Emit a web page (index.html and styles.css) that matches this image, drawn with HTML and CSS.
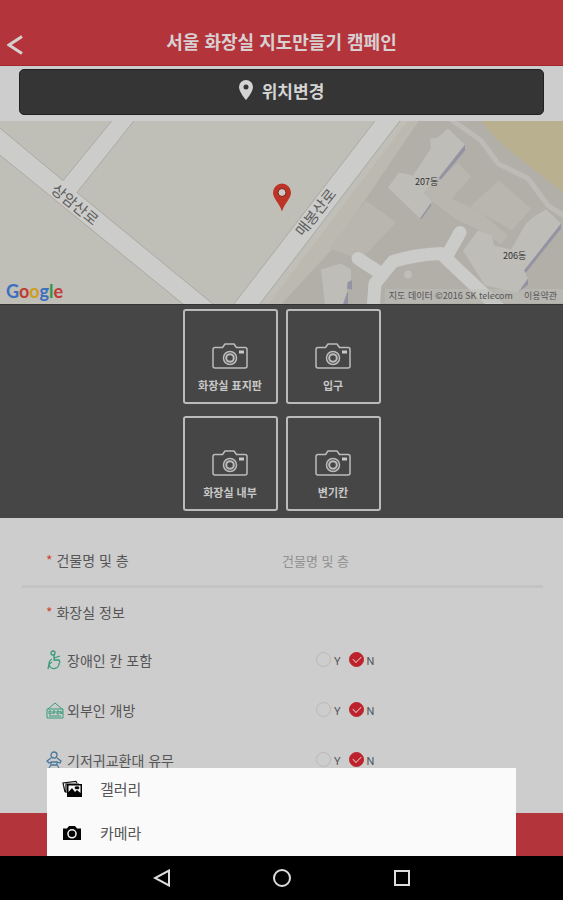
FILE: index.html
```html
<!DOCTYPE html>
<html lang="ko">
<head>
    <meta charset="UTF-8">
    <meta name="viewport" content="width=device-width, initial-scale=1">
    <title>서울 화장실 지도만들기 캠페인</title>
    <link rel="stylesheet" href="styles.css">
</head>
<body>
    <svg width="0" height="0" class="defs" aria-hidden="true">
        <symbol id="camera" viewBox="0 0 36 26">
            <g fill="none" stroke="#bcbcbc" stroke-width="1.5" stroke-linejoin="round">
                <path d="M3 4.500H10.500L13 1H22L24.500 4.500H33Q35 4.500 35 6.500V23Q35 25 33 25H3Q1 25 1 23V6.500Q1 4.500 3 4.500Z"/>
                <circle cx="18" cy="15" r="6.500"/>
                <circle cx="18" cy="15" r="3.800" stroke-width="2"/>
            </g>
            <rect x="27" y="7.500" width="5" height="3" fill="#c8c8c8"/>
        </symbol>
    </svg>

    <main class="screen">
        <header class="header">
            <button class="back" aria-label="뒤로">
                <svg width="16" height="20" viewBox="0 0 16 20"><path d="M15 1.500L2 10L15 18.500" fill="none" stroke="#d6d0d0" stroke-width="3"/></svg>
            </button>
            <h1>서울 화장실 지도만들기 캠페인</h1>
        </header>

        <div class="location">
            <button class="location-btn">
                <svg width="14" height="20" viewBox="0 0 14 20"><path fill="#d4d4d4" fill-rule="evenodd" d="M7 0A7 7 0 0 0 0 7C0 12 7 20 7 20S14 12 14 7A7 7 0 0 0 7 0ZM7 4.500A2.500 2.500 0 1 1 7 9.500A2.500 2.500 0 1 1 7 4.500Z"/></svg>
                위치변경
            </button>
        </div>

        <div class="map">
            <svg class="map-tiles" viewBox="0 0 563 184" preserveAspectRatio="xMidYMid slice">
                <rect width="563" height="184" fill="#bfbeb7"/>
                <!-- apartment block -->
                <path fill="#bcb9b0" d="M408 0H563V184H268Z"/>
                <path fill="#b2afa9" d="M419 0H563V184H281L330 131Z"/>
                <path fill="#b9b090" d="M481 0H563V72L520 38L500 22Z"/>
                <path fill="none" stroke="#bdbbb6" stroke-width="5" stroke-linejoin="round" d="M448 -3L464 8L481 20L498 43L528 58L548 85L565 96"/>
                <g fill="#b8b6af">
                    <path d="M366 80L396 102L361 139L329 128Z"/>
                    <path d="M458 42L471 56L452 78L481 92L508 115L501 124L480 110L455 98L432 81L424 72Z"/>
                    <path d="M499 60L531 88L512 110L470 86Z"/>
                </g>
                <g fill="#9493a3">
                    <path d="M465 23V30L441 59L437 56Z"/>
                    <path d="M431 79V85L421 99L418 94Z"/>
                    <path d="M561 102V108L526 152L522 148Z"/>
                    <path d="M528 157V164L519 172L516 168Z"/>
                    <path d="M348 160H352V169L347 168ZM342 172H348V184H342Z"/>
                </g>
                <g fill="#bebdb7">
                    <path d="M448 8L465 24L439 57L424 72L432 81L420 98L388 67L399 52L413 55L431 28L430 18L438 17Z"/>
                    <path d="M546 89L561 103L524 150L528 158L518 172L485 165L463 130L478 110L492 115L494 125L511 129L526 103L534 96Z"/>
                    <path d="M321 149L341 143L351 149V160L347 162V172L343 184H325Z"/>
                    <circle cx="408" cy="154" r="4"/>
                </g>
                <path fill="none" stroke="#cbcbc9" stroke-width="13" stroke-linejoin="round" stroke-linecap="round" d="M373 190L375 163L393 141Q415 134 441 133L498 187M358 138L381 153M460 112L446 137"/>
                <!-- main roads -->
                <path fill="#cccccb" stroke="#aaa9a4" d="M-2 6L63 60L113 -1H135L77 72L216 186H186L-2 33Z"/>
                <path fill="#cccccb" stroke="#aaa9a4" d="M376 -1H401L258 186H232Z"/>
                <text class="road" transform="translate(50 71) rotate(39)">상암산로</text>
                <text class="road" transform="translate(303 117) rotate(-52)">매봉산로</text>
                <text class="dong" x="415" y="64">207동</text>
                <text class="dong" x="503" y="138">206동</text>
                <!-- pin -->
                <path fill="#bd3427" d="M282 63A9 9 0 0 0 273 72C273 78 279 82 282 91C285 82 291 78 291 72A9 9 0 0 0 282 63Z"/>
                <circle cx="282" cy="72" r="4" fill="#d0c9c6" stroke="#732019"/>
            </svg>
            <div class="google"><span class="b">G</span><span class="r">o</span><span class="y">o</span><span class="b">g</span><span class="g">l</span><span class="r">e</span></div>
            <div class="credit"><span>지도 데이터 ©2016 SK telecom</span><a href="#">이용약관</a></div>
        </div>

        <div class="photos">
            <button class="photo"><svg width="36" height="26"><use href="#camera"/></svg>화장실 표지판</button>
            <button class="photo"><svg width="36" height="26"><use href="#camera"/></svg>입구</button>
            <button class="photo"><svg width="36" height="26"><use href="#camera"/></svg>화장실 내부</button>
            <button class="photo"><svg width="36" height="26"><use href="#camera"/></svg>변기칸</button>
        </div>

        <form class="form">
            <div class="row name-row">
                <label for="building"><span class="req">*</span> 건물명 및 층</label>
                <input type="text" id="building" placeholder="건물명 및 층">
            </div>
            <h2><span class="req">*</span> 화장실 정보</h2>

            <div class="row">
                <span class="item">
                    <svg width="18" height="20" viewBox="0 0 18 20" fill="none" stroke="#359b7b" stroke-width="1.300"><circle cx="7" cy="3" r="2"/><path d="M8 5V10H13L14 13M8 8L14 6M6 9A5 5 0 1 0 13 13M6 12L3 14L2 19"/></svg>
                    장애인 칸 포함
                </span>
                <span class="yn">
                    <label><input type="radio" name="disabled">Y</label>
                    <label><input type="radio" name="disabled" checked>N</label>
                </span>
            </div>
            <div class="row">
                <span class="item">
                    <svg width="18" height="20" viewBox="0 0 18 20" fill="none" stroke="#359b7b"><path d="M1 9H17V18H1ZM2 9L9 3L16 9M3 16H15"/><path stroke-width="1" d="M3 11H5V14H3ZM7 14V11H9V13H7M13 11H11V14H13M11 12H13M14 14V11L16 14V11"/></svg>
                    외부인 개방
                </span>
                <span class="yn">
                    <label><input type="radio" name="open">Y</label>
                    <label><input type="radio" name="open" checked>N</label>
                </span>
            </div>
            <div class="row">
                <span class="item">
                    <svg width="18" height="20" viewBox="0 0 18 20" fill="none" stroke="#4a7898" stroke-width="1.300"><circle cx="8" cy="5" r="3"/><path d="M5 8L1 11L3 13L5 12V15H11V12L14 13L15 11L11 8M5 15L3 18M11 15L13 18M5 12H11"/></svg>
                    기저귀교환대 유무
                </span>
                <span class="yn">
                    <label><input type="radio" name="diaper">Y</label>
                    <label><input type="radio" name="diaper" checked>N</label>
                </span>
            </div>
        </form>

        <div class="submit-bar"></div>

        <div class="sheet">
            <button>
                <svg width="20" height="18" viewBox="0 0 20 18"><path fill="none" stroke="#111" stroke-width="1.200" d="M3 12L1 3L14 1.500L15 3M4 13V4H17"/><path fill="#050505" fill-rule="evenodd" d="M5 4H20V17H5ZM6.500 5.500V12L10 8L13 12L15 10L18.500 13V5.500ZM15 6.500A1.500 1.500 0 1 1 15 9A1.500 1.500 0 1 1 15 6.500Z"/></svg>
                갤러리
            </button>
            <button>
                <svg width="20" height="18" viewBox="0 0 20 18"><path fill="#050505" fill-rule="evenodd" d="M1 4.500H5L7 2H13L15 4.500H19V16H1ZM10 5A4.800 4.800 0 1 0 10 14.600A4.800 4.800 0 1 0 10 5Z"/><circle cx="10" cy="9.800" r="3.300" fill="#050505"/></svg>
                카메라
            </button>
        </div>
    </main>

    <nav class="navbar">
        <button aria-label="뒤로"><svg width="18" height="18" viewBox="0 0 18 18"><path d="M16 1.500V16.500L2 9Z"/></svg></button>
        <button aria-label="홈"><svg width="18" height="18" viewBox="0 0 18 18"><circle cx="9" cy="9" r="8"/></svg></button>
        <button aria-label="최근 앱"><svg width="18" height="18" viewBox="0 0 18 18"><path d="M2 2H16V16H2Z"/></svg></button>
    </nav>
</body>
</html>
```
FILE: styles.css
```css
* {
    box-sizing: border-box;
}
body {
    margin: 0;
    min-height: 100vh;
    display: flex;
    flex-direction: column;
    background: #cdcdcd;
    color: #555;
    font-family: "Noto Sans CJK KR", sans-serif;
    font-size: 14px;
}
button, input {
    font-family: inherit;
    border: none;
    background: none;
    padding: 0;
}
button {
    cursor: pointer;
}
.defs {
    position: absolute;
}
.screen {
    position: relative;
    flex: 1;
    display: flex;
    flex-direction: column;
}

/* header */
.header {
    display: grid;
    grid-template-columns: 40px 1fr 40px;
    align-items: end;
    height: 66px;
    padding-bottom: 10px;
    background: #b4343c;
    border-bottom: 1px solid #a5232c;
}
.back {
    display: flex;
    padding-left: 7px;
}
h1 {
    margin: 0;
    font-size: 18px;
    line-height: 28px;
    text-align: center;
    color: #d8d0d0;
}

/* location */
.location {
    padding: 3px 19px 6px;
}
.location-btn {
    display: flex;
    justify-content: center;
    align-items: center;
    gap: 9px;
    width: 100%;
    height: 46px;
    padding-bottom: 4px;
    border: 1px solid #222;
    border-radius: 5px;
    background: #353535;
    color: #d4d4d4;
    font-size: 17px;
    font-weight: bold;
}

/* map */
.map {
    position: relative;
    height: 183px;
    overflow: hidden;
}
.map-tiles {
    display: block;
    width: 100%;
    height: 100%;
}
.road {
    font-size: 15px;
    fill: #5d5d5b;
}
.dong {
    font-size: 9px;
    fill: #333;
}
.google {
    position: absolute;
    left: 6px;
    bottom: 1px;
    font-family: Lato, sans-serif;
    font-size: 18px;
    line-height: 24px;
    font-weight: bold;
}
.google .b { color: #3b6fc0; }
.google .r { color: #c23a32; }
.google .y { color: #cf9d20; }
.google .g { color: #37924d; }
.credit {
    position: absolute;
    right: 0;
    bottom: 1px;
    display: flex;
    gap: 11px;
    padding: 0 6px 0 4px;
    background: rgba(190, 189, 185, 0.5);
    font-size: 9px;
    line-height: 14px;
}
.credit a {
    color: inherit;
    text-decoration: none;
}

/* photos */
.photos {
    display: grid;
    grid-template-columns: 95px 95px;
    justify-content: center;
    gap: 12px 8px;
    padding: 4px 0 7px;
    background: #464646;
    border-top: 1px solid #333;
}
.photo {
    display: flex;
    flex-direction: column;
    align-items: center;
    justify-content: flex-end;
    gap: 8px;
    height: 95px;
    padding-bottom: 9px;
    border: 2px solid #bbb;
    border-radius: 3px;
    color: #c8c8c8;
    font-size: 11px;
    line-height: 16px;
    font-weight: bold;
}

/* form */
.form {
    padding: 17px 20px 0 22px;
}
.row {
    display: grid;
    grid-template-columns: 270px 1fr;
    align-items: center;
    height: 50px;
    padding-left: 24px;
}
.name-row {
    grid-template-columns: 236px 1fr;
    height: 53px;
    border-bottom: 3px solid #c3c3c3;
}
.name-row input {
    width: 100%;
    font-size: 13px;
    color: #555;
}
.name-row input::placeholder {
    color: #909090;
    opacity: 1;
}
h2 {
    margin: 0;
    padding-left: 24px;
    font-size: 14px;
    font-weight: normal;
    line-height: 48px;
}
.req {
    color: #d0472b;
}
.item {
    display: flex;
    align-items: center;
    gap: 3px;
    padding-bottom: 2px;
}
.yn {
    display: flex;
    gap: 8px;
}
.yn label {
    display: flex;
    align-items: center;
    gap: 3px;
    padding-top: 2px;
    font-family: Roboto, sans-serif;
    font-size: 11px;
    line-height: 20px;
}
.yn input {
    position: relative;
    appearance: none;
    width: 15px;
    height: 15px;
    margin: 0 0 5px;
    border: 1px solid #b9b9b9;
    border-radius: 50%;
}
.yn input:checked {
    background: #bd222c;
    border-color: #bd222c;
}
.yn input:checked::after {
    content: "";
    position: absolute;
    left: 3px;
    top: 3px;
    width: 7px;
    height: 4px;
    border: solid #dcb5b3;
    border-width: 0 0 1px 1px;
    transform: rotate(-45deg);
}

.submit-bar {
    height: 43px;
    margin-top: auto;
    background: #b4343c;
}

/* picker */
.sheet {
    position: absolute;
    left: 47px;
    right: 47px;
    bottom: 0;
    background: #fafafa;
}
.sheet button {
    display: flex;
    align-items: center;
    gap: 18px;
    width: 100%;
    height: 44px;
    padding: 0 15px 3px;
    font-size: 15px;
    color: #555;
}

.navbar {
    display: flex;
    justify-content: center;
    gap: 102px;
    height: 44px;
    background: #000;
}
.navbar svg {
    display: block;
    fill: none;
    stroke: #ddd;
    stroke-width: 2;
}
```
